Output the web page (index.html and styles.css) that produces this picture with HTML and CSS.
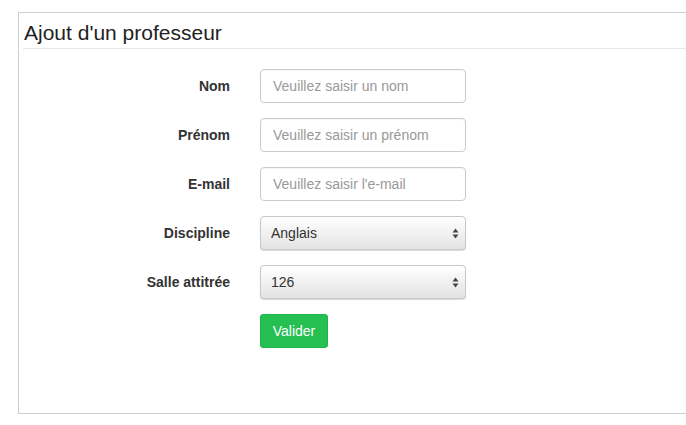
FILE: index.html
```html
<!DOCTYPE html>
<html lang="fr">
<head>
<meta charset="utf-8">
<title>Ajout d'un professeur</title>
<link rel="stylesheet" href="styles.css">
</head>
<body>
<div class="panel">
  <h1 class="panel-title">Ajout d'un professeur</h1>
  <form class="form">
    <div class="row">
      <label class="label" for="nom">Nom</label>
      <input class="control" id="nom" type="text" placeholder="Veuillez saisir un nom">
    </div>
    <div class="row">
      <label class="label" for="prenom">Prénom</label>
      <input class="control" id="prenom" type="text" placeholder="Veuillez saisir un prénom">
    </div>
    <div class="row">
      <label class="label" for="email">E-mail</label>
      <input class="control" id="email" type="text" placeholder="Veuillez saisir l'e-mail">
    </div>
    <div class="row">
      <label class="label" for="discipline">Discipline</label>
      <select class="control select" id="discipline"><option>Anglais</option></select>
    </div>
    <div class="row">
      <label class="label" for="salle">Salle attitrée</label>
      <select class="control select" id="salle"><option>126</option></select>
    </div>
    <div class="row">
      <span class="label"></span>
      <button type="button" class="btn">Valider</button>
    </div>
  </form>
</div>
</body>
</html>
```
FILE: styles.css
```css
html, body {
  margin: 0;
  padding: 0;
  background: #fff;
  font-family: "Liberation Sans", Arial, sans-serif;
  color: #333;
}
.panel {
  margin: 12px 0 0 18px;
  width: 700px;
  height: 400px;
  border: 1px solid #cfcfcf;
  border-right: none;
}
.panel-title {
  margin: 0 0 0 4px;
  padding: 9px 0 4px 1px;
  font-size: 21px;
  font-weight: normal;
  line-height: 22px;
  color: #222;
  border-bottom: 1px solid #e6e6e6;
}
.form {
  display: flex;
  flex-direction: column;
  gap: 15px;
  padding-top: 20px;
}
.row {
  display: flex;
  align-items: center;
  gap: 30px;
}
.label {
  width: 211px;
  text-align: right;
  font-size: 14px;
  font-weight: bold;
  color: #333;
}
.control {
  box-sizing: border-box;
  width: 206px;
  height: 34px;
  margin: 0;
  padding: 6px 12px;
  border: 1px solid #ccc;
  border-radius: 4px;
  font-family: "Liberation Sans", Arial, sans-serif;
  font-size: 14px;
  color: #555;
  background: #fff;
  box-shadow: inset 0 1px 1px rgba(0,0,0,0.04);
}
.control::placeholder {
  color: #999;
}
.select {
  -webkit-appearance: none;
  appearance: none;
  padding: 6px 10px;
  border-color: #c8c8c8;
  color: #333;
  background-color: #f2f2f2;
  background-image:
    url("data:image/svg+xml;utf8,<svg xmlns='http://www.w3.org/2000/svg' width='7' height='11' viewBox='0 0 7 11'><path d='M3.5 0.5 L6.5 4.5 L0.5 4.5 Z' fill='%23444'/><path d='M3.5 10.5 L6.5 6.5 L0.5 6.5 Z' fill='%23444'/></svg>"),
    linear-gradient(#ffffff, #e3e3e3);
  background-repeat: no-repeat, no-repeat;
  background-position: right 6px center, 0 0;
  background-size: 7px 11px, 100% 100%;
  box-shadow: 0 1px 1px rgba(0,0,0,0.15);
}
.btn {
  box-sizing: border-box;
  width: 68px;
  height: 34px;
  margin: 0;
  padding: 0;
  border: 1px solid #22b24c;
  border-radius: 3px;
  background: #26bf51;
  color: #fff;
  font-family: "Liberation Sans", Arial, sans-serif;
  font-size: 14px;
}
```
